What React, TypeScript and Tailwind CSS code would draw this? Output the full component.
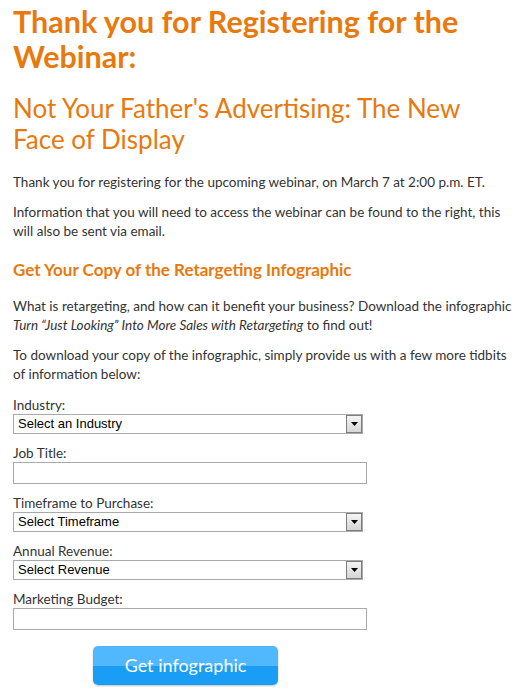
import React from 'react';

const orange = 'text-[#e8790e]';

const SelectBox = ({ placeholder }: { placeholder: string }) => (
  <div className="relative w-[350px] h-[20px]">
    <select
      defaultValue=""
      className="block w-full h-full appearance-none border border-[#a9a9a9] bg-white pl-[4px] text-[13px] leading-[18px] text-black font-[family-name:'Liberation_Sans',Arial,sans-serif] outline-none"
    >
      <option value="">{placeholder}</option>
    </select>
    <div className="pointer-events-none absolute right-[1px] top-[1px] flex h-[18px] w-[16px] items-center justify-center border border-[#7d7d7d] bg-linear-to-b from-[#f4f4f4] to-[#d6d6d6]">
      <svg width="7" height="4" viewBox="0 0 7 4">
        <path d="M0 0h7L3.5 4z" fill="#000" />
      </svg>
    </div>
  </div>
);

const TextBox = () => (
  <input
    type="text"
    className="block w-[354px] h-[22px] border border-[#a9a9a9] bg-white px-[3px] text-[13px] outline-none"
  />
);

const Field = ({ label, children }: { label: string; children: React.ReactNode }) => (
  <div className="flex flex-col">
    <label className="text-[13.5px] leading-[17px] text-[#333]">{label}</label>
    {children}
  </div>
);

export default function App() {
  return (
    <div className="w-[527px] min-h-[698px] bg-white pl-[13px] pr-[10px] pt-[4px] font-[family-name:Lato,sans-serif] text-[#333]">
      <h1 className={`text-[30.5px] leading-[35px] font-bold ${orange}`}>
        Thank you for Registering for the Webinar:
      </h1>
      <h2 className={`mt-[19px] text-[26px] leading-[31px] ${orange}`}>
        Not Your Father's Advertising: The New Face of Display
      </h2>

      <p className="mt-[18px] text-[13.5px] leading-[19px]">
        Thank you for registering for the upcoming webinar, on March 7 at 2:00 p.m. ET.
      </p>
      <p className="mt-[11px] text-[13.5px] leading-[19px]">
        Information that you will need to access the webinar can be found to the right, this will also be sent via email.
      </p>

      <h3 className={`mt-[19px] text-[17px] leading-[20px] font-bold ${orange}`}>
        Get Your Copy of the Retargeting Infographic
      </h3>

      <p className="mt-[17px] text-[13.5px] leading-[19px]">
        What is retargeting, and how can it benefit your business? Download the infographic{' '}
        <em>Turn “Just Looking” Into More Sales with Retargeting</em> to find out!
      </p>
      <p className="mt-[11px] text-[13.5px] leading-[19px]">
        To download your copy of the infographic, simply provide us with a few more tidbits of information below:
      </p>

      <form className="mt-[13px] flex flex-col gap-[11px]" onSubmit={(e) => e.preventDefault()}>
        <Field label="Industry:">
          <SelectBox placeholder="Select an Industry" />
        </Field>
        <Field label="Job Title:">
          <TextBox />
        </Field>
        <Field label="Timeframe to Purchase:">
          <SelectBox placeholder="Select Timeframe" />
        </Field>
        <Field label="Annual Revenue:">
          <SelectBox placeholder="Select Revenue" />
        </Field>
        <Field label="Marketing Budget:">
          <TextBox />
        </Field>

        <button
          type="submit"
          className="ml-[80px] mt-[5px] h-[39px] w-[185px] rounded-[5px] bg-linear-to-b from-[#52b8fd] from-50% to-[#1a9ef5] to-50% text-[18px] text-white shadow-[0_1px_2px_rgba(0,0,0,0.25)]"
        >
          Get infographic
        </button>
      </form>
    </div>
  );
}
